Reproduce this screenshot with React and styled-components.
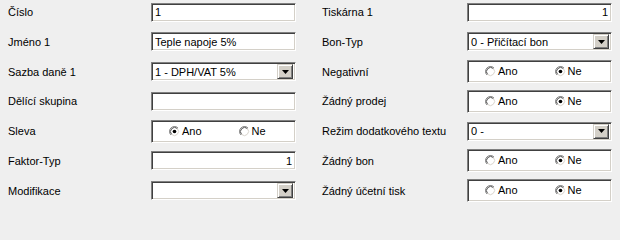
import React from 'react';
import styled, { createGlobalStyle } from 'styled-components';

const GlobalStyle = createGlobalStyle`
  body {
    margin: 0;
    background: #efefef;
    font-family: 'Liberation Sans', Arial, sans-serif;
    font-size: 11px;
    color: #000;
  }
`;

const Form = styled.div`
  display: grid;
  grid-template-columns: 143px 145px 171px 145px;
  grid-auto-rows: 24px;
  row-gap: 5.8px;
  align-items: center;
  padding-left: 8px;
  width: 620px;
  box-sizing: border-box;
`;

const Label = styled.div`
  padding-left: ${(p) => (p.$indent ? '26px' : '0')};
  white-space: nowrap;
  line-height: 13px;
  padding-top: 1px;
`;

const sunken = `
  box-sizing: border-box;
  background: #fff;
  border: 1px solid;
  border-color: #808080 #ffffff #ffffff #808080;
  box-shadow: inset 1px 1px 0 #404040, inset -1px -1px 0 #d4d0c8;
`;

const TextBox = styled.input`
  ${sunken}
  appearance: none;
  outline: none;
  width: 145px;
  height: 19px;
  margin: 0;
  padding: 0 3px 0 3px;
  font: inherit;
  color: #000;
  text-align: ${(p) => (p.$right ? 'right' : 'left')};
`;

const Select = styled.div`
  ${sunken}
  width: 145px;
  height: 19px;
  padding: 2px;
  display: flex;
  align-items: center;
`;

const SelectText = styled.span`
  flex: 1;
  padding-left: 1px;
  white-space: nowrap;
  overflow: hidden;
`;

const DropButton = styled.span`
  box-sizing: border-box;
  width: 16px;
  height: 15px;
  background: #d4d0c8;
  border: 1px solid;
  border-color: #d4d0c8 #404040 #404040 #d4d0c8;
  box-shadow: inset 1px 1px 0 #ffffff, inset -1px -1px 0 #808080;
  display: flex;
  align-items: center;
  justify-content: center;
`;

const RadioGroup = styled.div`
  ${sunken}
  width: 145px;
  height: 23px;
  padding: 2px;
  display: grid;
  grid-template-columns: 1fr 1fr;
  align-items: center;
`;

const Option = styled.label`
  display: flex;
  align-items: center;
  gap: 2px;
  padding-left: 15px;
  line-height: 13px;
`;

const Arrow = () => (
  <svg width="7" height="4" viewBox="0 0 7 4">
    <path d="M0 0h7L3.5 4z" fill="#000" />
  </svg>
);

const RadioMark = ({ checked }) => (
  <svg width="11" height="11" viewBox="0 0 12 12">
    <circle cx="6" cy="6" r="5" fill="#fff" />
    <path d="M2.11 9.89A5.5 5.5 0 0 1 9.89 2.11" stroke="#808080" fill="none" />
    <path d="M9.89 2.11A5.5 5.5 0 0 1 2.11 9.89" stroke="#ffffff" fill="none" />
    <path d="M2.82 9.18A4.5 4.5 0 0 1 9.18 2.82" stroke="#404040" fill="none" />
    <path d="M9.18 2.82A4.5 4.5 0 0 1 2.82 9.18" stroke="#d4d0c8" fill="none" />
    {checked && <circle cx="6" cy="6" r="2" fill="#000" />}
  </svg>
);

const Dropdown = ({ value }) => (
  <Select>
    <SelectText>{value}</SelectText>
    <DropButton>
      <Arrow />
    </DropButton>
  </Select>
);

const YesNo = ({ yes }) => (
  <RadioGroup>
    <Option>
      <RadioMark checked={yes} />
      Ano
    </Option>
    <Option>
      <RadioMark checked={!yes} />
      Ne
    </Option>
  </RadioGroup>
);

export default function App() {
  return (
    <>
      <GlobalStyle />
      <Form>
        <Label>Číslo</Label>
        <TextBox readOnly defaultValue="1" />
        <Label $indent>Tiskárna 1</Label>
        <TextBox readOnly $right defaultValue="1" />

        <Label>Jméno 1</Label>
        <TextBox readOnly defaultValue="Teple napoje 5%" />
        <Label $indent>Bon-Typ</Label>
        <Dropdown value="0 - Přičítací bon" />

        <Label>Sazba daně 1</Label>
        <Dropdown value="1 - DPH/VAT 5%" />
        <Label $indent>Negativní</Label>
        <YesNo yes={false} />

        <Label>Dělící skupina</Label>
        <TextBox readOnly defaultValue="" />
        <Label $indent>Žádný prodej</Label>
        <YesNo yes={false} />

        <Label>Sleva</Label>
        <YesNo yes />
        <Label $indent>Režim dodatkového textu</Label>
        <Dropdown value="0 -" />

        <Label>Faktor-Typ</Label>
        <TextBox readOnly $right defaultValue="1" />
        <Label $indent>Žádný bon</Label>
        <YesNo yes={false} />

        <Label>Modifikace</Label>
        <Dropdown value="" />
        <Label $indent>Žádný účetní tisk</Label>
        <YesNo yes={false} />
      </Form>
    </>
  );
}
